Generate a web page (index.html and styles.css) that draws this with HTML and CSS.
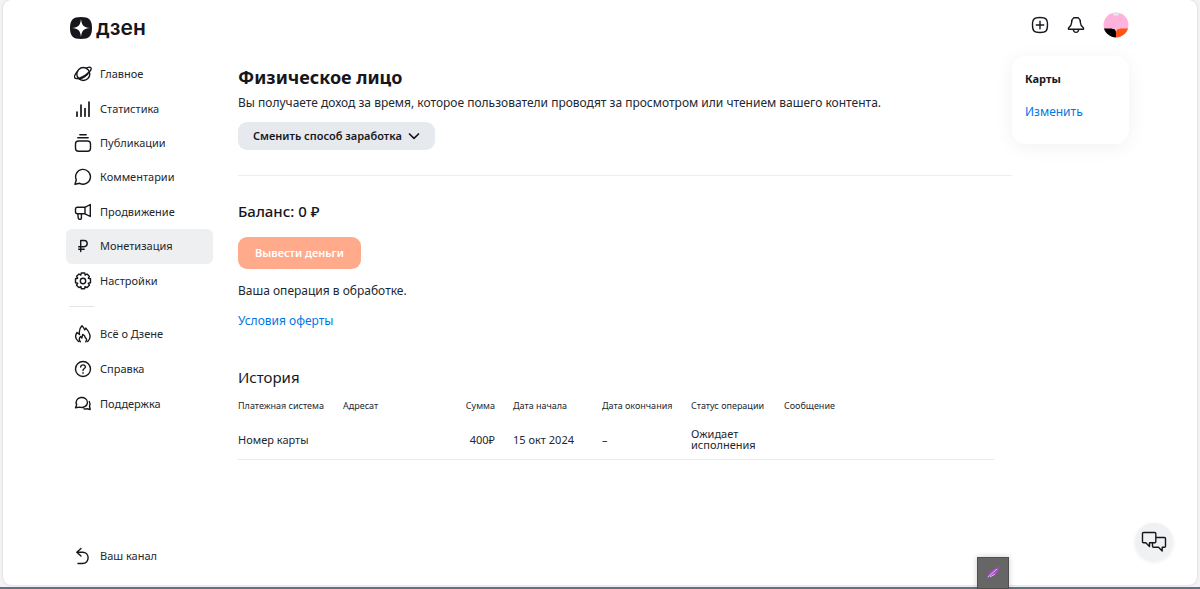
FILE: index.html
```html
<!DOCTYPE html>
<html lang="ru">
<head>
    <meta charset="UTF-8">
    <meta name="viewport" content="width=device-width, initial-scale=1.0">
    <title>Монетизация - Дзен</title>
    <link rel="stylesheet" href="styles.css">
</head>
<body>
    <div class="page">
        <header class="header">
            <a class="logo" href="#">
                <svg width="22" height="22" viewBox="0 0 22 22" aria-hidden="true">
                    <path fill="#16161d" d="M11 0C19 0 22 3 22 11S19 22 11 22 0 19 0 11 3 0 11 0z"/>
                    <path fill="#fff" d="M11 2c.8 6.500 2.500 8.200 9 9-6.500.8-8.200 2.500-9 9-.8-6.500-2.500-8.200-9-9 6.500-.8 8.200-2.500 9-9z"/>
                </svg>
                <span>дзен</span>
            </a>
            <div class="header-actions">
                <button class="icon-button" type="button" aria-label="Создать">
                    <svg class="icon" width="18" height="18" viewBox="0 0 18 18">
                        <path d="M9 1.500c6 0 7.500 1.500 7.500 7.500S15 16.500 9 16.500 1.500 15 1.500 9 3 1.500 9 1.500zM9 5.300v7.400M5.300 9h7.400"/>
                    </svg>
                </button>
                <button class="icon-button" type="button" aria-label="Уведомления">
                    <svg class="icon" width="18" height="18" viewBox="0 0 18 18">
                        <path d="M6.700 1.700h4.600c1.800 1.300 2.100 2.800 2.100 5 0 2 .9 3.300 3.100 5.300v1.200H1.500V12c2.200-2 3.100-3.300 3.100-5.300 0-2.200.3-3.700 2.100-5zM6.300 13.500c.3 3.800 5.100 3.800 5.400 0"/>
                    </svg>
                </button>
                <button class="icon-button" type="button" aria-label="Профиль">
                    <svg width="26" height="26" viewBox="0 0 26 26">
                        <clipPath id="avatar-clip"><circle cx="13" cy="13" r="12.500"/></clipPath>
                        <g clip-path="url(#avatar-clip)">
                            <path fill="#ffb3dc" d="M0 0h26v17H0z"/>
                            <path fill="#e4e4ea" d="M10 0h6v3l-3 1-3-1z"/>
                            <path fill="#fff" d="M9 16h8v3H9z"/>
                            <path fill="#000" d="M0 16.500h9q4 0 4 4V26H0z"/>
                            <path fill="#ff5412" d="M26 16.500h-9q-4 0-4 4V26h13z"/>
                            <path fill="#ffb3dc" d="M9 13h8v3.500q-3 0-4 2-1-2-4-2z"/>
                        </g>
                    </svg>
                </button>
            </div>
        </header>

        <div class="layout">
            <nav class="sidebar">
                <div class="menu menu-main">
                    <a class="menu-item" href="#">
                        <svg class="icon" width="18" height="18" viewBox="0 0 18 18"><circle cx="9.300" cy="9" r="6.500"/><path d="M3.700 6.200C1.200 8.900-.1 11.900.9 13.100c1.400 1.500 6.600-.3 10.600-3.100 4-2.700 6.400-5.700 5.400-7.200-.6-.9-2.400-.7-4.200 0M5.300 14.100c4.500-1.400 8.300-4.300 10-7.500"/></svg>
                        Главное
                    </a>
                    <a class="menu-item" href="#">
                        <svg class="icon icon-bold" width="18" height="18" viewBox="0 0 18 18"><path d="M3 12v4.200M7 5v11.200M11 8.500v7.700M15 2v14.200"/></svg>
                        Статистика
                    </a>
                    <a class="menu-item" href="#">
                        <svg class="icon" width="18" height="18" viewBox="0 0 18 18"><path d="M5.800.8h6.400M3.800 3.800h10.400M4.500 7h9q3 0 3 3v4.200q0 3-3 3h-9q-3 0-3-3V10q0-3 3-3z"/></svg>
                        Публикации
                    </a>
                    <a class="menu-item" href="#">
                        <svg class="icon" width="18" height="18" viewBox="0 0 18 18"><path d="M1 16.300l1.300-4.500a7.400 7.400 0 1 1 3.300 3.500z"/></svg>
                        Комментарии
                    </a>
                    <a class="menu-item" href="#">
                        <svg class="icon" width="18" height="18" viewBox="0 0 18 18"><path d="M11 4.300H3.500q-2 0-2 2v2.500q0 2 2 2H11l5.300 2.700V1.500zM11 4.300v6.500M3.800 11l.5 4.300q.2.900 1 .9h1.200q.9 0 .9-.9V11"/></svg>
                        Продвижение
                    </a>
                    <a class="menu-item active" href="#">
                        <svg class="icon" width="18" height="18" viewBox="0 0 18 18"><path d="M6.700 14.500V3.500h3.400a3.100 3.100 0 0 1 0 6.200H4.700M4.700 12.200h5.500"/></svg>
                        Монетизация
                    </a>
                    <a class="menu-item" href="#">
                        <svg class="icon" width="18" height="18" viewBox="0 0 18 18"><circle cx="9" cy="9" r="2.700"/><path d="M7.300 1h3.400l.5 2.100 1.800-1.100 2.300 2.300-1 1.900 2.200.6v3.900l-2.200.6 1.100 1.900-2.400 2.400-1.900-1.100-.5 2.200H7.400l-.6-2.200-1.900 1.100-2.400-2.400 1.200-1.900-2.200-.6V6.800l2.200-.6-1.100-1.900L5 2l1.800 1.100z"/></svg>
                        Настройки
                    </a>
                </div>
                <hr class="menu-divider">
                <div class="menu menu-extra">
                    <a class="menu-item" href="#">
                        <svg class="icon" width="18" height="18" viewBox="0 0 18 18"><path d="M4.500 16.500C.8 13.500 1.300 10 3 7.500l2.500 2c-.7-3.500.2-6.500 2.400-8.800 1.200 1 2.300 2.500 2.800 4.200l1.200-1.800c3.800 4.200 6.200 9.500 1.800 13.400M6.300 16.800c-1.600-2-1-3.900.3-5.200l1.300 1.300.8-3.500c1.500.8 2.500 2 2.700 3.500 1.600 1 1.400 2.700.4 3.900"/></svg>
                        Всё о Дзене
                    </a>
                    <a class="menu-item" href="#">
                        <svg class="icon" width="18" height="18" viewBox="0 0 18 18"><circle cx="9" cy="9" r="7.500"/><path d="M6.700 7c.2-2.900 4.800-2.800 4.700 0C11.300 8.600 9 8.500 9 10.500M9 12.800v.4"/></svg>
                        Справка
                    </a>
                    <a class="menu-item" href="#">
                        <svg class="icon" width="18" height="18" viewBox="0 0 18 18"><path d="M1.500 12.700l1.200-3a5.700 5 0 1 1 3 2.400zM15.300 6.500c1 1.700.9 3.200.2 4.700l.7 3.300-3.200-.8c-.8.3-2 .4-3 .1"/></svg>
                        Поддержка
                    </a>
                </div>
                <a class="menu-item menu-back" href="#">
                    <svg class="icon" width="18" height="18" viewBox="0 0 18 18"><path d="M7 1.500L2.800 5.200 7 9M3 5.200h5.500c7.500 0 7.500 11.300 0 11.300H4"/></svg>
                    Ваш канал
                </a>
            </nav>

            <main class="content">
                <section class="intro">
                    <h1>Физическое лицо</h1>
                    <p>Вы получаете доход за время, которое пользователи проводят за просмотром или чтением вашего контента.</p>
                    <button class="button button-grey" type="button">
                        Сменить способ заработка
                        <svg class="icon icon-bold" width="12" height="8" viewBox="0 0 12 8" aria-hidden="true"><path d="M1.500 2L6 6.300 10.500 2"/></svg>
                    </button>
                </section>

                <section class="balance">
                    <h2>Баланс: 0 ₽</h2>
                    <button class="button button-orange" type="button" disabled>Вывести деньги</button>
                    <p>Ваша операция в обработке.</p>
                    <a class="link" href="#">Условия оферты</a>
                </section>

                <section class="history">
                    <h2>История</h2>
                    <table class="history-table">
                        <thead>
                            <tr>
                                <th class="col-system">Платежная система</th>
                                <th class="col-address">Адресат</th>
                                <th class="col-sum">Сумма</th>
                                <th class="col-date">Дата начала</th>
                                <th class="col-date">Дата окончания</th>
                                <th class="col-status">Статус операции</th>
                                <th>Сообщение</th>
                            </tr>
                        </thead>
                        <tbody>
                            <tr>
                                <td>Номер карты</td>
                                <td></td>
                                <td class="col-sum">400₽</td>
                                <td>15 окт 2024</td>
                                <td>–</td>
                                <td class="col-status">Ожидает исполнения</td>
                                <td></td>
                            </tr>
                        </tbody>
                    </table>
                </section>
            </main>

            <aside class="cards">
                <h3>Карты</h3>
                <a class="link" href="#">Изменить</a>
            </aside>
        </div>
    </div>

    <button class="chat-button" type="button" aria-label="Чат">
        <svg class="icon" width="26" height="22" viewBox="0 0 26 22">
            <path d="M2.500 1.500h11.300q1 0 1 1v8.300q0 1-1 1H8.500v3.700l-3.700-3.700H2.500q-1 0-1-1V2.500q0-1 1-1zM14.800 6.500h8.700q1 0 1 1v7.800q0 1-1 1h-2.300V20l-3.700-3.700h-5q-1 0-1-1v-3.500"/>
        </svg>
    </button>
    <button class="feather-button" type="button" aria-label="Заметки">
        <svg width="14" height="14" viewBox="0 0 14 14">
            <path fill="#a84fc4" d="M1 13c0-4 2-7 6-9 2-1 4-1.500 6-3.500 0 4-1 7-5 9-3 1.500-5 1.500-7 3.500z"/>
            <path fill="none" stroke="#e3b5ef" stroke-width="1" d="M2 11l9-8M4 11l5-3"/>
        </svg>
    </button>
</body>
</html>
```

FILE: styles.css
```css
* {
    box-sizing: border-box;
}
body {
    margin: 0;
    min-height: 100vh;
    display: flex;
    flex-direction: column;
    padding: 0 3px 2px;
    background-color: #f3f3f5;
    border-bottom: 2px solid #5d747d;
    font-family: "Noto Sans", "Open Sans", sans-serif;
    font-size: 12px;
    line-height: 16px;
    color: #22282f;
}
h1, h2, h3, p {
    margin: 0;
}
a {
    color: inherit;
    text-decoration: none;
}
button {
    font-family: inherit;
    border: none;
    padding: 0;
    cursor: pointer;
}
.page {
    flex: 1;
    display: flex;
    flex-direction: column;
    padding: 0 68px 12px 63px;
    background-color: #fff;
    border-radius: 8px;
    box-shadow: 0 0 2px rgba(0, 0, 0, 0.2);
}
.icon {
    flex-shrink: 0;
    fill: none;
    stroke: #16161d;
    stroke-width: 1.4;
    stroke-linecap: round;
    stroke-linejoin: round;
}
.icon-bold {
    stroke-width: 1.7;
}

/* header */
.header {
    display: flex;
    justify-content: space-between;
    align-items: flex-start;
    height: 56px;
    padding-top: 12px;
}
.logo {
    display: flex;
    align-items: center;
    gap: 4px;
    padding: 5px 4px;
    font-family: Inter, sans-serif;
    font-size: 21px;
    font-weight: 600;
    line-height: 22px;
    color: #16161d;
}
.header-actions {
    display: flex;
    align-items: center;
    gap: 18px;
}
.icon-button {
    display: flex;
    background: none;
}

/* columns */
.layout {
    flex: 1;
    display: flex;
    align-items: flex-start;
}
.sidebar {
    align-self: stretch;
    display: flex;
    flex-direction: column;
    width: 147px;
    margin-right: 25px;
    padding-top: 1px;
    font-size: 11px;
}
.menu {
    display: flex;
    flex-direction: column;
    justify-content: space-between;
}
.menu-main {
    height: 241px;
}
.menu-extra {
    height: 104px;
}
.menu-item {
    display: flex;
    align-items: center;
    gap: 8px;
    height: 35px;
    padding: 0 8px;
    border-radius: 6px;
}
.menu-item.active {
    background-color: #eeeff1;
}
.menu-divider {
    width: 25px;
    height: 1px;
    margin: 8px 3px 10px;
    border: none;
    background-color: #e4e4e8;
}
.menu-back {
    margin-top: auto;
}

/* content */
.content {
    flex: 1;
    min-width: 0;
}
.intro {
    padding: 9px 0 25px;
    border-bottom: 1px solid #eeeef0;
}
h1 {
    font-size: 18px;
    line-height: 24px;
    color: #16161d;
}
.intro p {
    margin: 6px 0 11px;
}
.button {
    display: flex;
    align-items: center;
    justify-content: center;
    border-radius: 9px;
    font-size: 11px;
    font-weight: 600;
    line-height: 16px;
}
.button-grey {
    gap: 6px;
    padding: 6px 15px;
    background-color: #e6e9ed;
    color: #16161d;
}
.button-orange {
    padding: 8px 17px;
    background-color: #ffaa8b;
    color: #fff;
    cursor: default;
}
.balance {
    padding: 25px 0 38px;
}
h2 {
    font-size: 15px;
    font-weight: 500;
    line-height: 20px;
    color: #16161d;
}
.balance p {
    margin: 14px 0;
}
.balance h2 {
    margin-bottom: 16px;
}
.link {
    color: #0077e6;
}
.history {
    padding-right: 18px;
}
.history h2 {
    margin-bottom: 9px;
    font-weight: 400;
}
.history-table {
    width: 100%;
    table-layout: fixed;
    border-collapse: collapse;
    border-bottom: 1px solid #ebebee;
}
.history-table th,
.history-table td {
    padding: 0;
    text-align: left;
    font-weight: 400;
    white-space: nowrap;
}
.history-table th {
    height: 20px;
    font-size: 9px;
}
.history-table td {
    height: 43px;
    padding-top: 4px;
    font-size: 11px;
    line-height: 11px;
}
.history-table .col-system,
.history-table .col-address {
    width: 105px;
}
.history-table .col-sum {
    width: 65px;
    padding-right: 18px;
    text-align: right;
}
.history-table .col-date {
    width: 89px;
}
.history-table .col-status {
    width: 93px;
    padding-right: 18px;
}
.history-table td.col-status {
    white-space: normal;
}

/* cards */
.cards {
    width: 117px;
    padding: 15px 13px 24px;
    border-radius: 14px;
    background-color: #fff;
    box-shadow: 0 3px 20px rgba(0, 0, 0, 0.06);
}
.cards h3 {
    margin-bottom: 17px;
    font-size: 11px;
    line-height: 16px;
    color: #16161d;
}

/* floating buttons */
.chat-button {
    position: fixed;
    right: 27px;
    bottom: 28px;
    display: flex;
    align-items: center;
    justify-content: center;
    width: 38px;
    height: 38px;
    border-radius: 50%;
    background-color: #f0f1f3;
    box-shadow: 0 1px 4px rgba(0, 0, 0, 0.08);
}
.feather-button {
    position: fixed;
    right: 191px;
    bottom: 0;
    display: flex;
    align-items: center;
    justify-content: center;
    width: 32px;
    height: 32px;
    border: 1px solid #505050;
    background-color: #666;
    box-shadow: 0 0 6px rgba(0, 0, 0, 0.2);
}
```
